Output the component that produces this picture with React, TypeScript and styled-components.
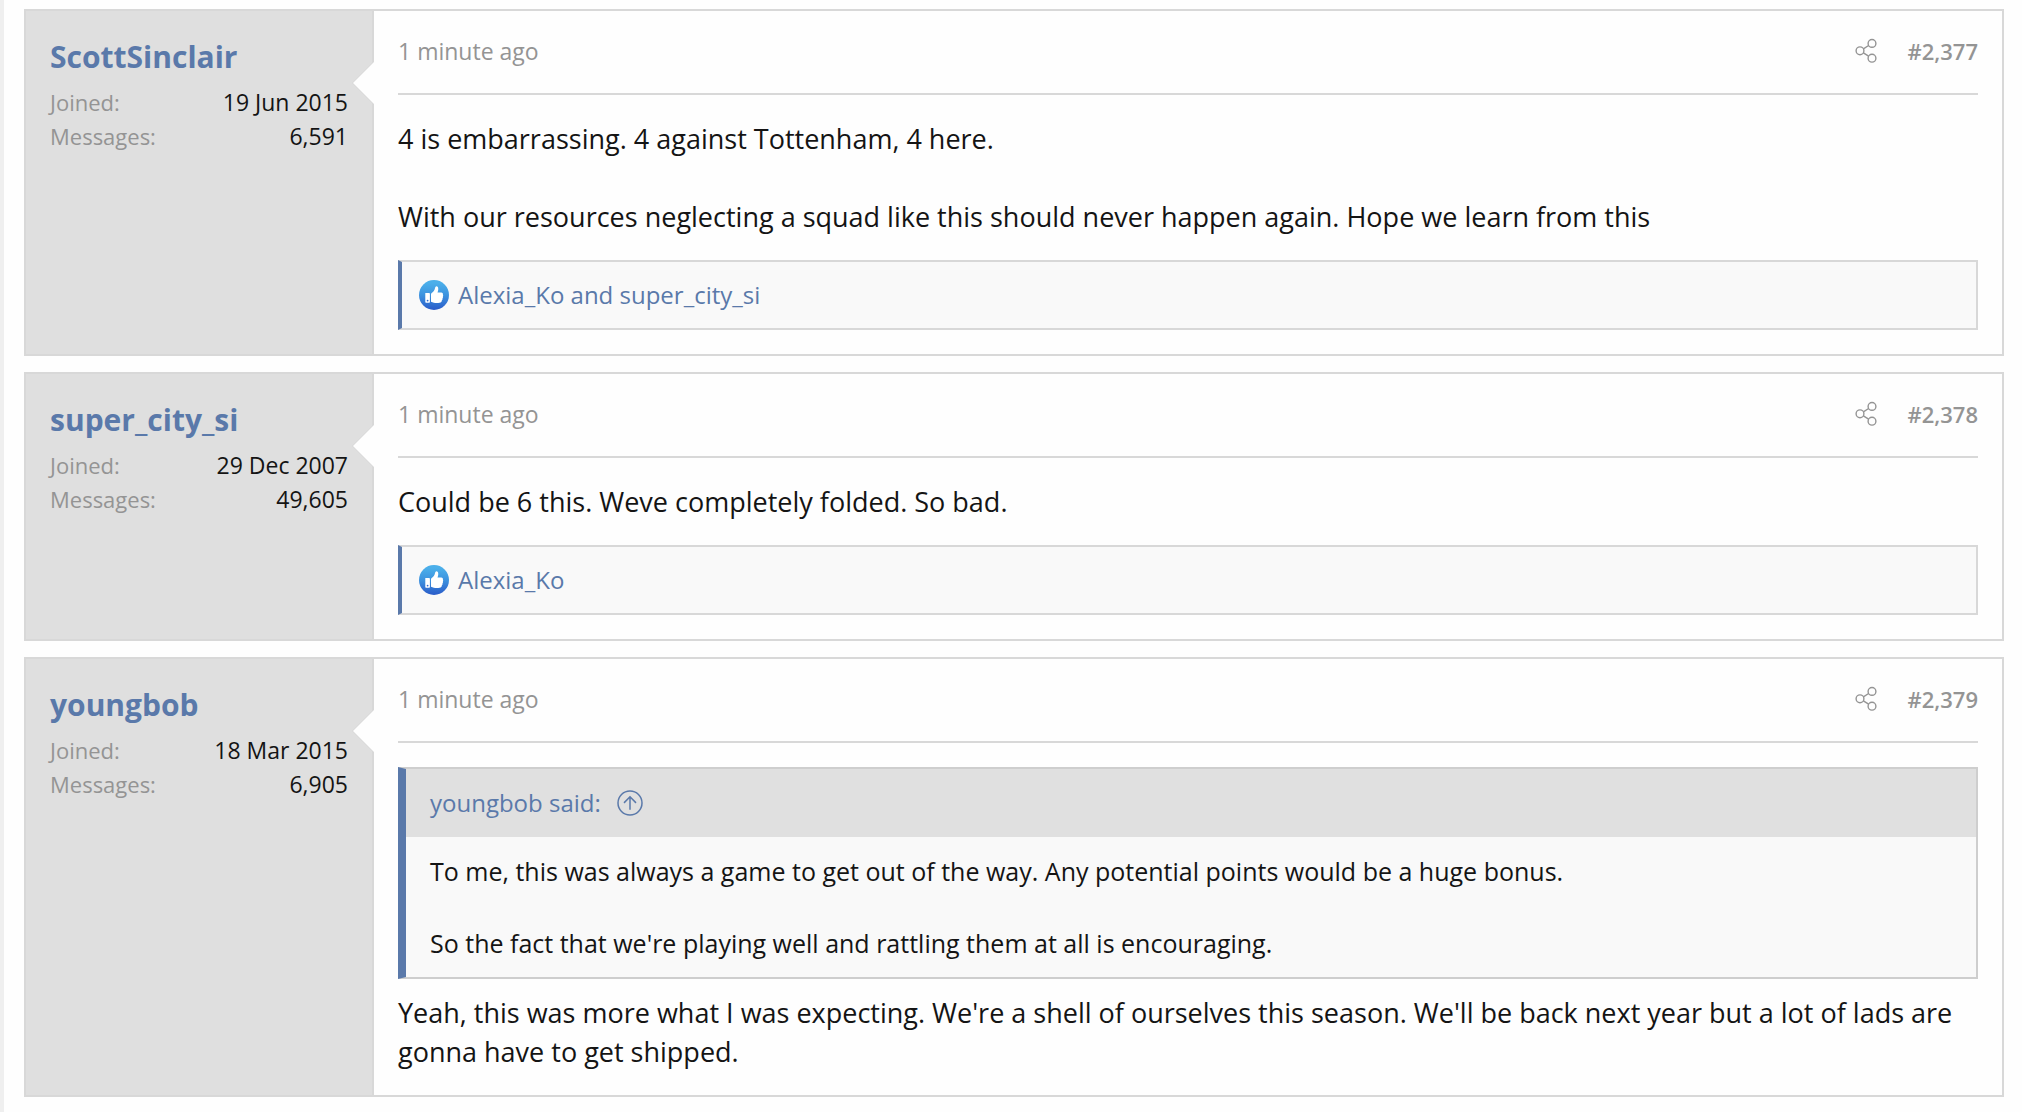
import React from 'react';
import styled, { createGlobalStyle } from 'styled-components';

const color = {
  page: '#fefefe',
  gutter: '#efefef',
  user: '#dfdfdf',
  line: '#d8d8d8',
  quoteLine: '#cecece',
  panel: '#f9f9f9',
  link: '#5a79aa',
  muted: '#949494',
  text: '#141414',
};

const GlobalStyle = createGlobalStyle`
  *, *::before, *::after { box-sizing: border-box; }
  body {
    margin: 0;
    background: ${color.page};
    color: ${color.text};
    font-family: "Trebuchet MS", "Open Sans", "Noto Sans", sans-serif;
    font-size: 23px;
    line-height: 34px;
  }
  a { color: ${color.link}; text-decoration: none; }
`;

const Page = styled.main`
  min-height: 100vh;
  border-left: 4px solid ${color.gutter};
  padding: 9px 18px 14px 20px;
  display: flex;
  flex-direction: column;
  gap: 16px;
`;

const PostCard = styled.article`
  display: flex;
  border: 2px solid ${color.line};
`;

const UserCell = styled.aside`
  position: relative;
  flex: 0 0 348px;
  padding: 23px 24px 24px;
  background: ${color.user};
  border-right: 2px solid ${color.line};
`;

const Arrow = styled.span`
  &::before,
  &::after {
    content: '';
    position: absolute;
    top: 50px;
    right: -2px;
    border: 22px solid transparent;
    border-left-width: 0;
    border-right-color: ${color.line};
  }
  &::after {
    right: -3px;
    border-right-color: ${color.page};
  }
`;

const UserName = styled.h4`
  margin: 0 0 6px;
  font-size: 30px;
  line-height: 45px;
  font-weight: 700;
`;

const Stats = styled.dl`
  margin: 0;
`;

const Stat = styled.div`
  display: flex;
  justify-content: space-between;
  dt {
    color: ${color.muted};
    font-size: 22px;
  }
  dd {
    margin: 0;
  }
`;

const MainCell = styled.div`
  flex: 1;
  min-width: 0;
  padding: 23px 24px 24px;
`;

const PostHeader = styled.header`
  display: flex;
  align-items: center;
  justify-content: space-between;
  padding-bottom: 25px;
  border-bottom: 2px solid ${color.line};
  margin-bottom: 24px;
  a { color: ${color.muted}; }
`;

const HeaderLinks = styled.div`
  display: flex;
  align-items: center;
  gap: 30px;
`;

const ShareLink = styled.a`
  display: flex;
`;

const PostNumber = styled.a`
  font-size: 22px;
  font-weight: 600;
`;

const Body = styled.div`
  font-size: 27px;
  line-height: 39px;
`;

const Quote = styled.blockquote`
  margin: 0 0 14px;
  border: 2px solid ${color.quoteLine};
  border-left: 8px solid ${color.link};
  background: ${color.panel};
`;

const QuoteTitle = styled.a`
  display: flex;
  align-items: center;
  gap: 16px;
  padding: 16px 24px;
  background: #e0e0e0;
  font-size: 24px;
  line-height: 36px;
`;

const QuoteText = styled.div`
  padding: 16px 24px;
  font-size: 25px;
  line-height: 36px;
`;

const Reactions = styled.div`
  display: flex;
  align-items: center;
  gap: 9px;
  margin-top: 24px;
  padding: 16px 17px;
  border: 2px solid ${color.line};
  border-left: 4px solid ${color.link};
  background: ${color.panel};
  font-size: 24px;
`;

const ShareIcon = () => (
  <svg width="22" height="26" viewBox="0 0 22 26" fill="none" stroke="currentColor" strokeWidth="1.4" role="img" aria-label="Share">
    <circle cx="5" cy="12.8" r="3.9" />
    <circle cx="17" cy="5.4" r="3.9" />
    <circle cx="17" cy="20.2" r="3.9" />
    <path d="M8.4 10.8 13.6 7.5M8.4 14.8l5.2 3.3" />
  </svg>
);

const JumpIcon = () => (
  <svg width="26" height="26" viewBox="0 0 26 26" fill="none" stroke="currentColor" strokeWidth="1.5" aria-hidden="true">
    <circle cx="13" cy="13" r="12" />
    <path d="M13 19.8V6.8M7 12.9l6-6.1 6 6.1" />
  </svg>
);

const LikeIcon = ({ id }: { id: string }) => (
  <svg width="30" height="30" viewBox="0 0 30 30" role="img" aria-label="Like">
    <defs>
      <linearGradient id={id} x1="0" y1="0" x2="0" y2="1">
        <stop offset="0.1" stopColor="#4bafea" />
        <stop offset="0.5" stopColor="#3d93df" />
        <stop offset="1" stopColor="#2a5bc9" />
      </linearGradient>
    </defs>
    <circle cx="15" cy="15" r="15" fill={`url(#${id})`} />
    <path
      fill="#fff"
      d="M6.3 13h3.9c.4 0 .7.3.7.7v8.4c0 .4-.3.7-.7.7H7c-.4 0-.7-.3-.7-.7zM12 21.7v-7.5c0-.5.3-.9.7-1.2 1.7-1.2 2.9-2.6 3.2-4.500.2-1.300.7-2.400 1.800-2.300 1.500.2 1.700 2.200 1.500 3.800-.1.900-.4 1.700-.7 2.500h3.700c1.400 0 2 1 1.700 2 .4.500.4 1.300 0 1.900.2.800.1 1.500-.4 2 .1.900-.1 1.500-.6 1.900-.1 1.500-.8 2.300-2.300 2.500-3.200.4-6 .2-8.600-1.100z"
    />
    <circle cx="8.6" cy="20.6" r="0.9" fill="#2f6bd0" />
  </svg>
);

type Post = {
  user: string;
  joined: string;
  messages: string;
  number: string;
  lines: React.ReactNode;
  quote?: { by: string; text: React.ReactNode };
  likes?: string;
};

const posts: Post[] = [
  {
    user: 'ScottSinclair',
    joined: '19 Jun 2015',
    messages: '6,591',
    number: '#2,377',
    lines: (
      <>
        4 is embarrassing. 4 against Tottenham, 4 here.
        <br />
        <br />
        With our resources neglecting a squad like this should never happen again. Hope we learn from this
      </>
    ),
    likes: 'Alexia_Ko and super_city_si',
  },
  {
    user: 'super_city_si',
    joined: '29 Dec 2007',
    messages: '49,605',
    number: '#2,378',
    lines: 'Could be 6 this. Weve completely folded. So bad.',
    likes: 'Alexia_Ko',
  },
  {
    user: 'youngbob',
    joined: '18 Mar 2015',
    messages: '6,905',
    number: '#2,379',
    quote: {
      by: 'youngbob said:',
      text: (
        <>
          To me, this was always a game to get out of the way. Any potential points would be a huge bonus.
          <br />
          <br />
          So the fact that we're playing well and rattling them at all is encouraging.
        </>
      ),
    },
    lines:
      "Yeah, this was more what I was expecting. We're a shell of ourselves this season. We'll be back next year but a lot of lads are gonna have to get shipped.",
  },
];

const PostView = ({ post }: { post: Post }) => (
  <PostCard>
    <UserCell>
      <UserName>
        <a href="#user">{post.user}</a>
      </UserName>
      <Stats>
        <Stat>
          <dt>Joined:</dt>
          <dd>{post.joined}</dd>
        </Stat>
        <Stat>
          <dt>Messages:</dt>
          <dd>{post.messages}</dd>
        </Stat>
      </Stats>
      <Arrow />
    </UserCell>
    <MainCell>
      <PostHeader>
        <a href="#post">
          <time>1 minute ago</time>
        </a>
        <HeaderLinks>
          <ShareLink href="#share">
            <ShareIcon />
          </ShareLink>
          <PostNumber href="#post">{post.number}</PostNumber>
        </HeaderLinks>
      </PostHeader>
      <Body>
        {post.quote && (
          <Quote>
            <QuoteTitle href="#quoted">
              {post.quote.by}
              <JumpIcon />
            </QuoteTitle>
            <QuoteText>{post.quote.text}</QuoteText>
          </Quote>
        )}
        {post.lines}
      </Body>
      {post.likes && (
        <Reactions>
          <LikeIcon id={`like-${post.user}`} />
          <a href="#reactions">{post.likes}</a>
        </Reactions>
      )}
    </MainCell>
  </PostCard>
);

export default function App() {
  return (
    <>
      <GlobalStyle />
      <Page>
        {posts.map((post) => (
          <PostView key={post.number} post={post} />
        ))}
      </Page>
    </>
  );
}
